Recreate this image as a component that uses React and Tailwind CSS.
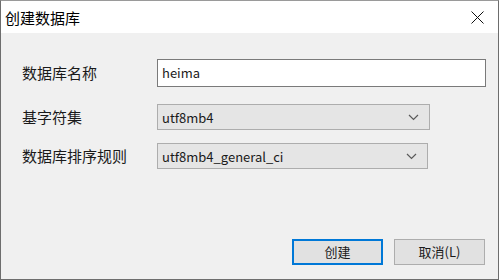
import React from 'react'

const font = { fontFamily: '"Noto Sans CJK SC", "Noto Sans", sans-serif' }

const Chevron = () => (
  <svg width="11" height="7" viewBox="0 0 11 7" className="shrink-0">
    <path d="M1 1 L5.5 5.5 L10 1" fill="none" stroke="#5a5a5a" strokeWidth="1.2" />
  </svg>
)

const Select = ({ value, width }) => (
  <div className={`${width} h-[26px] flex items-center justify-between pl-[4px] pr-[10px] bg-[#e5e5e5] border border-[#adadad] text-[13px] text-[#1a1a1a]`}>
    <span className="leading-none">{value}</span>
    <Chevron />
  </div>
)

export default function App() {
  return (
    <div className="w-[499px] h-[280px] flex flex-col border border-[#6d6d6d] border-t-[#9a9a9a] bg-[#f0f0f0] overflow-hidden" style={font}>
      {/* Title bar */}
      <div className="h-[32px] shrink-0 bg-white flex items-center justify-between pl-[4px] pr-[14px]">
        <span className="text-[15px] text-black leading-none">创建数据库</span>
        <svg width="13" height="13" viewBox="0 0 13 13">
          <path d="M0.5 0.5 L12.5 12.5 M12.5 0.5 L0.5 12.5" stroke="#111" strokeWidth="1" />
        </svg>
      </div>

      {/* Form */}
      <div className="flex-1 flex flex-col pl-[21px] pt-[26px]">
        <div className="flex items-center h-[28px]">
          <span className="w-[135px] text-[15px] text-[#1a1a1a]">数据库名称</span>
          <div className="w-[329px] h-[28px] flex items-center pl-[4px] bg-white border border-[#7a7a7a] text-[13px] text-[#1a1a1a]">
            heima
          </div>
        </div>
        <div className="flex items-center h-[26px] mt-[17px]">
          <span className="w-[135px] text-[15px] text-[#1a1a1a]">基字符集</span>
          <Select value="utf8mb4" width="w-[273px]" />
        </div>
        <div className="flex items-center h-[26px] mt-[13px]">
          <span className="w-[135px] text-[15px] text-[#1a1a1a]">数据库排序规则</span>
          <Select value="utf8mb4_general_ci" width="w-[271px]" />
        </div>

        <div className="flex justify-end gap-[11px] pr-[13px] mt-[70px]">
          <button className="w-[91px] h-[26px] flex items-center justify-center bg-[#e1e1e1] border-2 border-[#0078d7] text-[13px] text-[#1a1a1a]">
            创建
          </button>
          <button className="w-[91px] h-[26px] flex items-center justify-center bg-[#e1e1e1] border border-[#adadad] text-[13px] text-[#1a1a1a]">
            取消(L)
          </button>
        </div>
      </div>
    </div>
  )
}
